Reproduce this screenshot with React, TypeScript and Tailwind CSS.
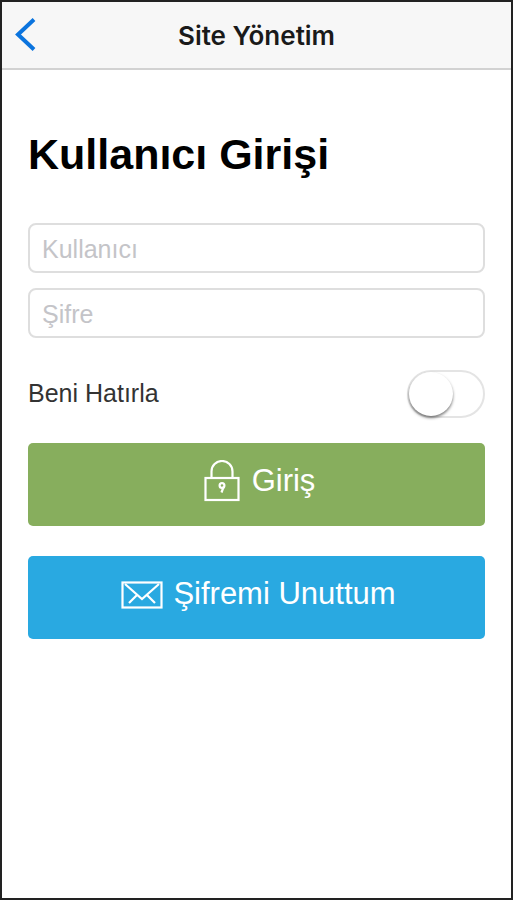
import React, { useState } from 'react';

const LockIcon: React.FC = () => (
  <svg width="36" height="44" viewBox="0 0 36 44" fill="none" stroke="currentColor" strokeWidth="2.2" aria-hidden="true">
    <rect x="1.5" y="18" width="33" height="22" />
    <path d="M7.5 18V11.5a10.5 10.5 0 0 1 21 0V18" />
    <circle cx="18" cy="25.5" r="2.4" />
    <path d="M19.5 27L17.5 32.5" />
  </svg>
);

const MailIcon: React.FC = () => (
  <svg width="42" height="28" viewBox="0 0 42 28" fill="none" stroke="currentColor" strokeWidth="2.2" aria-hidden="true">
    <rect x="1.5" y="1.5" width="39" height="25" />
    <path d="M4 3l17 15L38 3M8 22l8-8M34 22l-8-8" />
  </svg>
);

const App: React.FC = () => {
  const [remember, setRemember] = useState(false);

  return (
    <div className="min-h-screen border-2 border-[#222] bg-white font-['Liberation_Sans',Arial,sans-serif]">
      <header className="grid h-17 grid-cols-[48px_1fr_48px] items-center border-b-2 border-[#d2d2d2] bg-[#f7f7f7]">
        <button type="button" aria-label="Geri" className="flex h-full items-center pl-3 text-[#0b74de]">
          <svg width="22" height="34" viewBox="0 0 22 34" fill="none" stroke="currentColor" strokeWidth="4" aria-hidden="true">
            <path d="M20 1.5L4 16.5l16 15" />
          </svg>
        </button>
        <span className="text-center font-['Inter',sans-serif] text-[26px] font-semibold text-[#1a1a1a]">
          Site Yönetim
        </span>
      </header>

      <main className="px-[26px] pt-14">
        <h1 className="text-[43px] leading-14 font-bold text-black">Kullanıcı Girişi</h1>

        <form onSubmit={(e) => e.preventDefault()}>
          <div className="mt-[41px] space-y-[15px]">
            <input
              type="text"
              aria-label="Kullanıcı"
              placeholder="Kullanıcı"
              className="block h-[50px] w-full rounded-lg border-2 border-[#dedede] px-3 pt-0.5 text-[25px] text-[#333] placeholder:text-[#c4c4c8]"
            />
            <input
              type="password"
              aria-label="Şifre"
              placeholder="Şifre"
              className="block h-[50px] w-full rounded-lg border-2 border-[#dedede] px-3 pt-0.5 text-[25px] text-[#333] placeholder:text-[#c4c4c8]"
            />
          </div>

          <label className="mt-8 flex items-center justify-between text-[25px] text-[#333]">
            Beni Hatırla
            <span className="relative block h-12 w-[78px]">
              <input
                type="checkbox"
                role="switch"
                checked={remember}
                onChange={(e) => setRemember(e.target.checked)}
                className="peer block h-full w-full appearance-none rounded-full border-2 border-[#e4e4e4] bg-white checked:bg-[#87ae5d]"
              />
              <span className="pointer-events-none absolute top-0.5 left-0.5 h-11 w-11 rounded-full bg-white shadow-[0_2px_3px_rgba(0,0,0,0.5)] peer-checked:left-8" />
            </span>
          </label>

          <button
            type="submit"
            className="mt-[25px] flex h-[83px] w-full items-center justify-center gap-3 rounded-[5px] bg-[#87ae5d] pb-1.5 pl-1.5 text-[31px] text-white"
          >
            <LockIcon />
            Giriş
          </button>
          <button
            type="button"
            className="mt-[30px] flex h-[83px] w-full items-center justify-center gap-2.5 rounded-[5px] bg-[#29a9e1] pb-1.5 pl-1 text-[31px] text-white"
          >
            <MailIcon />
            Şifremi Unuttum
          </button>
        </form>
      </main>
    </div>
  );
};

export default App;
